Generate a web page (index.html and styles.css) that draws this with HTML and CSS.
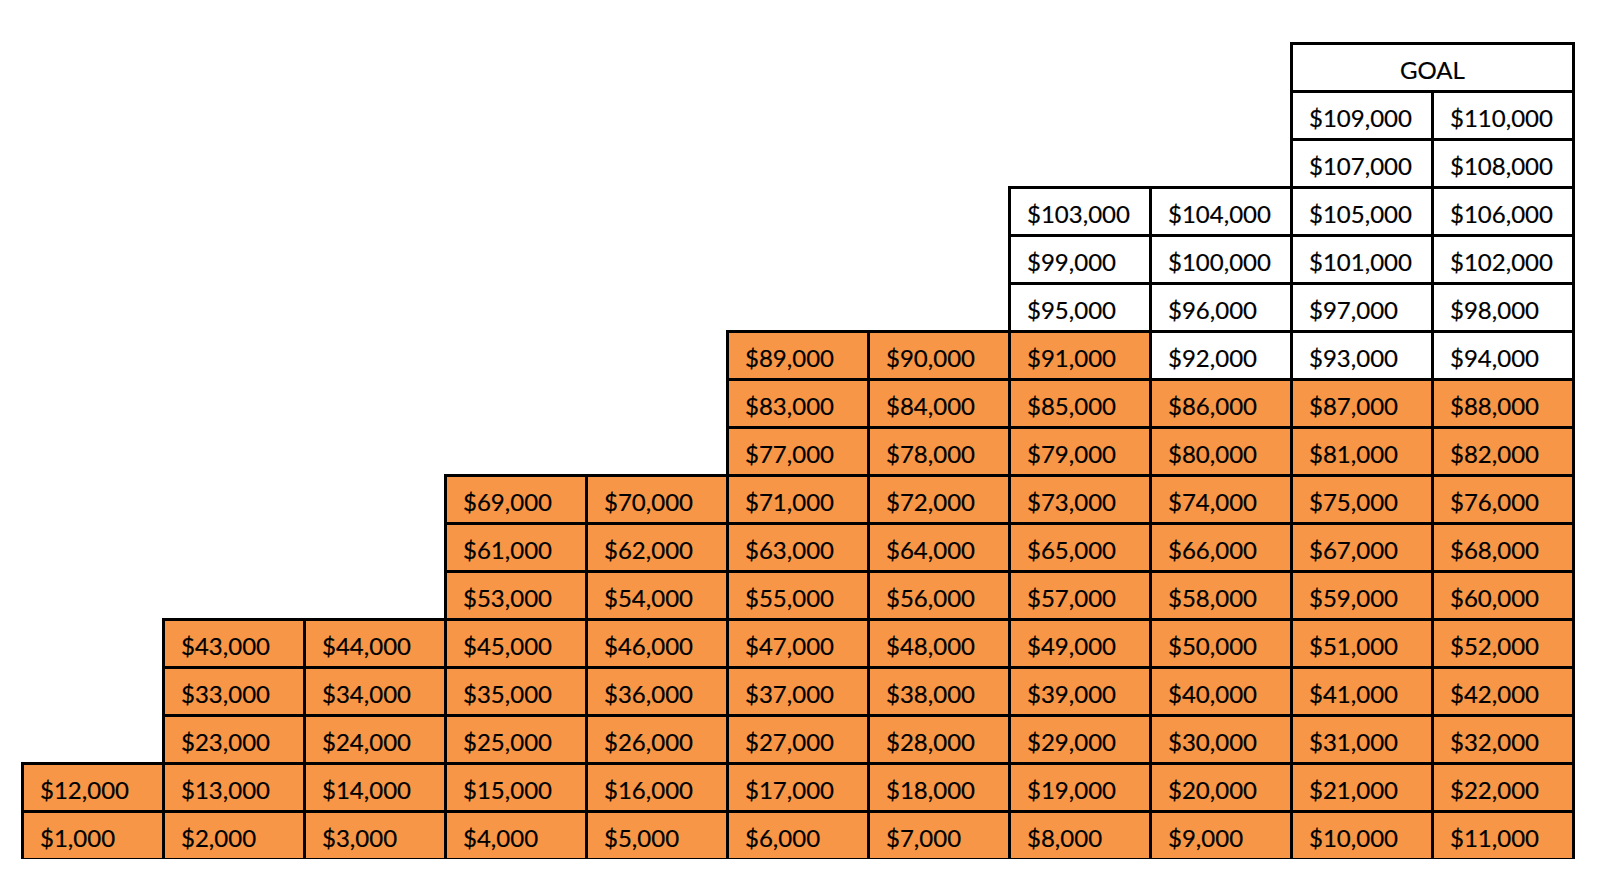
FILE: index.html
```html
<!DOCTYPE html>
<html>
<head>
<meta charset="utf-8">
<title>Savings Goal Chart</title>
<link rel="stylesheet" href="styles.css">
</head>
<body>
<div class="chart">
  <div class="cell goal c10">GOAL</div>

  <div class="cell c10">$109,000</div><div class="cell">$110,000</div>

  <div class="cell c10">$107,000</div><div class="cell">$108,000</div>

  <div class="cell c8">$103,000</div><div class="cell">$104,000</div><div class="cell">$105,000</div><div class="cell">$106,000</div>

  <div class="cell c8">$99,000</div><div class="cell">$100,000</div><div class="cell">$101,000</div><div class="cell">$102,000</div>

  <div class="cell c8">$95,000</div><div class="cell">$96,000</div><div class="cell">$97,000</div><div class="cell">$98,000</div>

  <div class="cell done c6">$89,000</div><div class="cell done">$90,000</div><div class="cell done">$91,000</div><div class="cell">$92,000</div><div class="cell">$93,000</div><div class="cell">$94,000</div>

  <div class="cell done c6">$83,000</div><div class="cell done">$84,000</div><div class="cell done">$85,000</div><div class="cell done">$86,000</div><div class="cell done">$87,000</div><div class="cell done">$88,000</div>

  <div class="cell done c6">$77,000</div><div class="cell done">$78,000</div><div class="cell done">$79,000</div><div class="cell done">$80,000</div><div class="cell done">$81,000</div><div class="cell done">$82,000</div>

  <div class="cell done c4">$69,000</div><div class="cell done">$70,000</div><div class="cell done">$71,000</div><div class="cell done">$72,000</div><div class="cell done">$73,000</div><div class="cell done">$74,000</div><div class="cell done">$75,000</div><div class="cell done">$76,000</div>

  <div class="cell done c4">$61,000</div><div class="cell done">$62,000</div><div class="cell done">$63,000</div><div class="cell done">$64,000</div><div class="cell done">$65,000</div><div class="cell done">$66,000</div><div class="cell done">$67,000</div><div class="cell done">$68,000</div>

  <div class="cell done c4">$53,000</div><div class="cell done">$54,000</div><div class="cell done">$55,000</div><div class="cell done">$56,000</div><div class="cell done">$57,000</div><div class="cell done">$58,000</div><div class="cell done">$59,000</div><div class="cell done">$60,000</div>

  <div class="cell done c2">$43,000</div><div class="cell done">$44,000</div><div class="cell done">$45,000</div><div class="cell done">$46,000</div><div class="cell done">$47,000</div><div class="cell done">$48,000</div><div class="cell done">$49,000</div><div class="cell done">$50,000</div><div class="cell done">$51,000</div><div class="cell done">$52,000</div>

  <div class="cell done c2">$33,000</div><div class="cell done">$34,000</div><div class="cell done">$35,000</div><div class="cell done">$36,000</div><div class="cell done">$37,000</div><div class="cell done">$38,000</div><div class="cell done">$39,000</div><div class="cell done">$40,000</div><div class="cell done">$41,000</div><div class="cell done">$42,000</div>

  <div class="cell done c2">$23,000</div><div class="cell done">$24,000</div><div class="cell done">$25,000</div><div class="cell done">$26,000</div><div class="cell done">$27,000</div><div class="cell done">$28,000</div><div class="cell done">$29,000</div><div class="cell done">$30,000</div><div class="cell done">$31,000</div><div class="cell done">$32,000</div>

  <div class="cell done c1">$12,000</div><div class="cell done">$13,000</div><div class="cell done">$14,000</div><div class="cell done">$15,000</div><div class="cell done">$16,000</div><div class="cell done">$17,000</div><div class="cell done">$18,000</div><div class="cell done">$19,000</div><div class="cell done">$20,000</div><div class="cell done">$21,000</div><div class="cell done">$22,000</div>

  <div class="cell done c1">$1,000</div><div class="cell done">$2,000</div><div class="cell done">$3,000</div><div class="cell done">$4,000</div><div class="cell done">$5,000</div><div class="cell done">$6,000</div><div class="cell done">$7,000</div><div class="cell done">$8,000</div><div class="cell done">$9,000</div><div class="cell done">$10,000</div><div class="cell done">$11,000</div>
</div>
</body>
</html>
```

FILE: styles.css
```css
html, body {
  margin: 0;
  padding: 0;
  background: #ffffff;
}

body {
  font-family: Lato, "Liberation Sans", sans-serif;
  color: #000000;
}

.chart {
  display: grid;
  grid-template-columns: repeat(11, 141px);
  grid-auto-rows: 48px;
  padding: 43px 0 0 22px;
  width: max-content;
}

.cell {
  box-sizing: border-box;
  margin: -1px -2px -2px -1px;
  border: 3px solid #000000;
  background: #ffffff;
  padding: 5px 0 0 16px;
  font-size: 24px;
  line-height: 40px;
  white-space: nowrap;
  overflow: hidden;
  -webkit-text-stroke: 0.2px #000000;
}

.cell.done {
  background: #f79646;
}

.cell.goal {
  grid-column: 10 / span 2;
  padding-left: 0;
  text-align: center;
}

.c1 { grid-column-start: 1; }
.c2 { grid-column-start: 2; }
.c4 { grid-column-start: 4; }
.c6 { grid-column-start: 6; }
.c8 { grid-column-start: 8; }
.c10 { grid-column-start: 10; }
```
